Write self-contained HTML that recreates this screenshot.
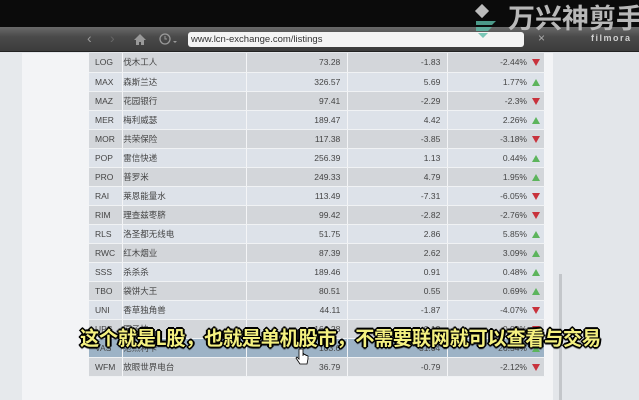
<!DOCTYPE html>
<html><head><meta charset="utf-8"><style>
*{margin:0;padding:0;box-sizing:border-box}
body{width:639px;height:400px;overflow:hidden;background:#e3e6ea;font-family:"Liberation Sans","Noto Sans CJK SC",sans-serif;position:relative}
.top{position:absolute;left:0;top:0;width:639px;height:27px;background:#0b0b0b}
.bar{position:absolute;left:0;top:27px;width:639px;height:25px;background:linear-gradient(#6a6a6a,#4a4a4a 40%,#3c3c3c);border-bottom:1px solid #222}
.url{position:absolute;left:188px;top:32px;width:336px;height:15px;background:#f4f4f4;border-radius:3px;font-size:9.5px;color:#333;padding:1px 0 0 3px;line-height:13px}
.panel{position:absolute;left:22px;top:53px;width:531px;height:347px;background:#f3f4f6}
.lp{position:absolute;left:0;top:53px;width:22px;height:347px;background:#e6e9ec}
table{position:absolute;left:89px;top:53px;width:456px;border-collapse:collapse;font-size:8.5px;color:#444}
td{height:19px;border-right:1px solid #f4f5f7;border-bottom:1px solid #f0f2f4;padding:0 7px}
tr:nth-child(odd) td{background:#d3d6da}
tr:nth-child(even) td{background:#dde2e9}
tr.hl td{background:#9db3c6}
td.c{width:32px;padding-left:6px}
td.n{width:124px;padding-left:0}
td.p{width:101px;text-align:right}
td.d{width:100px;text-align:right}
td.q{text-align:right;padding-right:17px;position:relative}
.up,.dn{position:absolute;right:4px;top:6px;width:0;height:0;border-left:4px solid transparent;border-right:4px solid transparent}
.up{border-bottom:7px solid #5cb45c}
.dn{border-top:7px solid #c8323c}
.sb{position:absolute;left:559px;top:274px;width:3px;height:126px;background:#c3c6ca}
.sub{position:absolute;left:80px;top:325px;font-size:19.2px;font-weight:bold;color:#f4f080;letter-spacing:-0.3px;font-family:"Noto Sans CJK SC",sans-serif;
text-shadow:-1px -1px 0 #000,1px -1px 0 #000,-1px 1px 0 #000,1px 1px 0 #000,0 2px 1px #000,2px 0 0 #000,-2px 0 0 #000,0 -2px 0 #000;white-space:nowrap;line-height:24px}
.wm{position:absolute;left:508px;top:1px;font-size:27px;font-weight:bold;color:#b8b8b8;font-family:"Noto Sans CJK SC",sans-serif;letter-spacing:0px;line-height:32px;white-space:nowrap}
.fl{position:absolute;left:591px;top:33px;font-size:9px;color:#d0d0d0;letter-spacing:1.5px;font-weight:bold}
.ic{position:absolute;color:#9a9a9a;font-size:14px;top:30px}
</style></head><body>
<div class="top"></div>
<div class="bar"></div>
<div class="ic" style="left:87px">&#8249;</div>
<div class="ic" style="left:110px;color:#666">&#8250;</div>
<svg style="position:absolute;left:134px;top:34px" width="12" height="11"><path d="M6 0L0 6h2v5h3V8h2v3h3V6h2z" fill="#999"/></svg>
<svg style="position:absolute;left:159px;top:33px" width="20" height="13"><circle cx="6" cy="6" r="5" fill="none" stroke="#999" stroke-width="1.3"/><path d="M6 3v3h2" stroke="#999" fill="none"/><path d="M14 8l2 2 2-2z" fill="#999"/></svg>
<div class="url">www.lcn-exchange.com/listings</div>
<div style="position:absolute;left:538px;top:31px;color:#aaa;font-size:12px">×</div>
<svg style="position:absolute;left:473px;top:4px" width="30" height="34"><rect x="4" y="2" width="10" height="10" transform="rotate(45 9 7)" fill="#bbb"/><path d="M3 17h20l-4 4H3zM3 23h16l-4 4H3zM5 29h10l-5 5z" fill="#5bbba8" opacity=".8"/></svg>
<div class="wm">万兴神剪手</div>
<div class="fl">filmora</div>
<div class="lp"></div>
<div class="panel"></div>
<div class="sb"></div>
<table>
<tr><td class="c">LOG</td><td class="n">伐木工人</td><td class="p">73.28</td><td class="d">-1.83</td><td class="q">-2.44%<i class="dn"></i></td></tr>
<tr><td class="c">MAX</td><td class="n">森斯兰达</td><td class="p">326.57</td><td class="d">5.69</td><td class="q">1.77%<i class="up"></i></td></tr>
<tr><td class="c">MAZ</td><td class="n">花园银行</td><td class="p">97.41</td><td class="d">-2.29</td><td class="q">-2.3%<i class="dn"></i></td></tr>
<tr><td class="c">MER</td><td class="n">梅利威瑟</td><td class="p">189.47</td><td class="d">4.42</td><td class="q">2.26%<i class="up"></i></td></tr>
<tr><td class="c">MOR</td><td class="n">共荣保险</td><td class="p">117.38</td><td class="d">-3.85</td><td class="q">-3.18%<i class="dn"></i></td></tr>
<tr><td class="c">POP</td><td class="n">雷信快递</td><td class="p">256.39</td><td class="d">1.13</td><td class="q">0.44%<i class="up"></i></td></tr>
<tr><td class="c">PRO</td><td class="n">普罗米</td><td class="p">249.33</td><td class="d">4.79</td><td class="q">1.95%<i class="up"></i></td></tr>
<tr><td class="c">RAI</td><td class="n">莱恩能量水</td><td class="p">113.49</td><td class="d">-7.31</td><td class="q">-6.05%<i class="dn"></i></td></tr>
<tr><td class="c">RIM</td><td class="n">理查兹枣脐</td><td class="p">99.42</td><td class="d">-2.82</td><td class="q">-2.76%<i class="dn"></i></td></tr>
<tr><td class="c">RLS</td><td class="n">洛圣都无线电</td><td class="p">51.75</td><td class="d">2.86</td><td class="q">5.85%<i class="up"></i></td></tr>
<tr><td class="c">RWC</td><td class="n">红木烟业</td><td class="p">87.39</td><td class="d">2.62</td><td class="q">3.09%<i class="up"></i></td></tr>
<tr><td class="c">SSS</td><td class="n">杀杀杀</td><td class="p">189.46</td><td class="d">0.91</td><td class="q">0.48%<i class="up"></i></td></tr>
<tr><td class="c">TBO</td><td class="n">袋饼大王</td><td class="p">80.51</td><td class="d">0.55</td><td class="q">0.69%<i class="up"></i></td></tr>
<tr><td class="c">UNI</td><td class="n">香草独角兽</td><td class="p">44.11</td><td class="d">-1.87</td><td class="q">-4.07%<i class="dn"></i></td></tr>
<tr><td class="c">UPS</td><td class="n">原子快</td><td class="p">161.28</td><td class="d">-0.12</td><td class="q">-0.09%<i class="dn"></i></td></tr>
<tr class="hl"><td class="c">VAS</td><td class="n">范杰利卡</td><td class="p">103.6</td><td class="d">31.04</td><td class="q">26.54%<i class="up"></i></td></tr>
<tr><td class="c">WFM</td><td class="n">放眼世界电台</td><td class="p">36.79</td><td class="d">-0.79</td><td class="q">-2.12%<i class="dn"></i></td></tr>
</table>
<svg style="position:absolute;left:295px;top:348px" width="14" height="18"><path d="M4 1v10l-2-2-1 1 4 6h7l1-5V8l-2-1v1-1l-2-1v1-1L8 5v3V1z" fill="#fff" stroke="#000" stroke-width=".8"/></svg>
<div class="sub">这个就是L股，也就是单机股市，不需要联网就可以查看与交易</div>
</body></html>
